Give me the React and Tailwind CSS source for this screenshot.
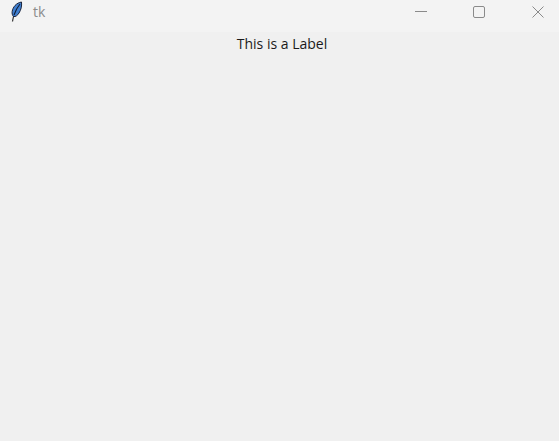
export default function App() {
  return (
    <div className="w-[559px] h-[441px] bg-[#f0f0f0] flex flex-col overflow-hidden font-['Open_Sans','Noto_Sans',sans-serif]">
      <div className="h-[32px] pb-[8px] bg-[#f3f3f3] flex items-center justify-between shrink-0">
        <div className="flex items-center">
          <svg className="ml-[9px]" width="15" height="22" viewBox="0 0 15 22">
            <path d="M3.5 20.5 L4.6 15" stroke="#333" strokeWidth="1.2" fill="none" />
            <path d="M4.5 15.5 C2 13 3 8 6 4.5 C8 2.5 10 1.5 12.5 1 C13 5 12 9 10 12 C8.5 14.5 6.5 16 4.5 15.5 Z" fill="#3f7fd0" stroke="#18223a" strokeWidth="1" />
            <path d="M5 14 C6.5 10 8.5 6 11 3" stroke="#0f1b33" strokeWidth="1.1" fill="none" />
          </svg>
          <span className="ml-[9px] text-[14px] leading-[20px] text-[#8c8c8c]">tk</span>
        </div>
        <div className="flex items-center">
          <div className="w-[58px] flex justify-center">
            <svg width="12" height="12" viewBox="0 0 12 12"><path d="M0 5.5H12" stroke="#8a8a8a" strokeWidth="1" /></svg>
          </div>
          <div className="w-[58px] flex justify-center">
            <svg width="12" height="12" viewBox="0 0 12 12"><rect x="0.5" y="0.5" width="11" height="11" rx="1.5" fill="none" stroke="#8a8a8a" strokeWidth="1" /></svg>
          </div>
          <div className="w-[51px] pr-[15px] flex justify-end">
            <svg width="12" height="12" viewBox="0 0 12 12"><path d="M0.5 0.5L11.5 11.5M11.5 0.5L0.5 11.5" stroke="#8a8a8a" strokeWidth="1" /></svg>
          </div>
        </div>
      </div>
      <div className="flex justify-center pl-[5px]">
        <span className="text-[14px] leading-[24px] text-[#1a1a1a]">This is a Label</span>
      </div>
    </div>
  );
}
